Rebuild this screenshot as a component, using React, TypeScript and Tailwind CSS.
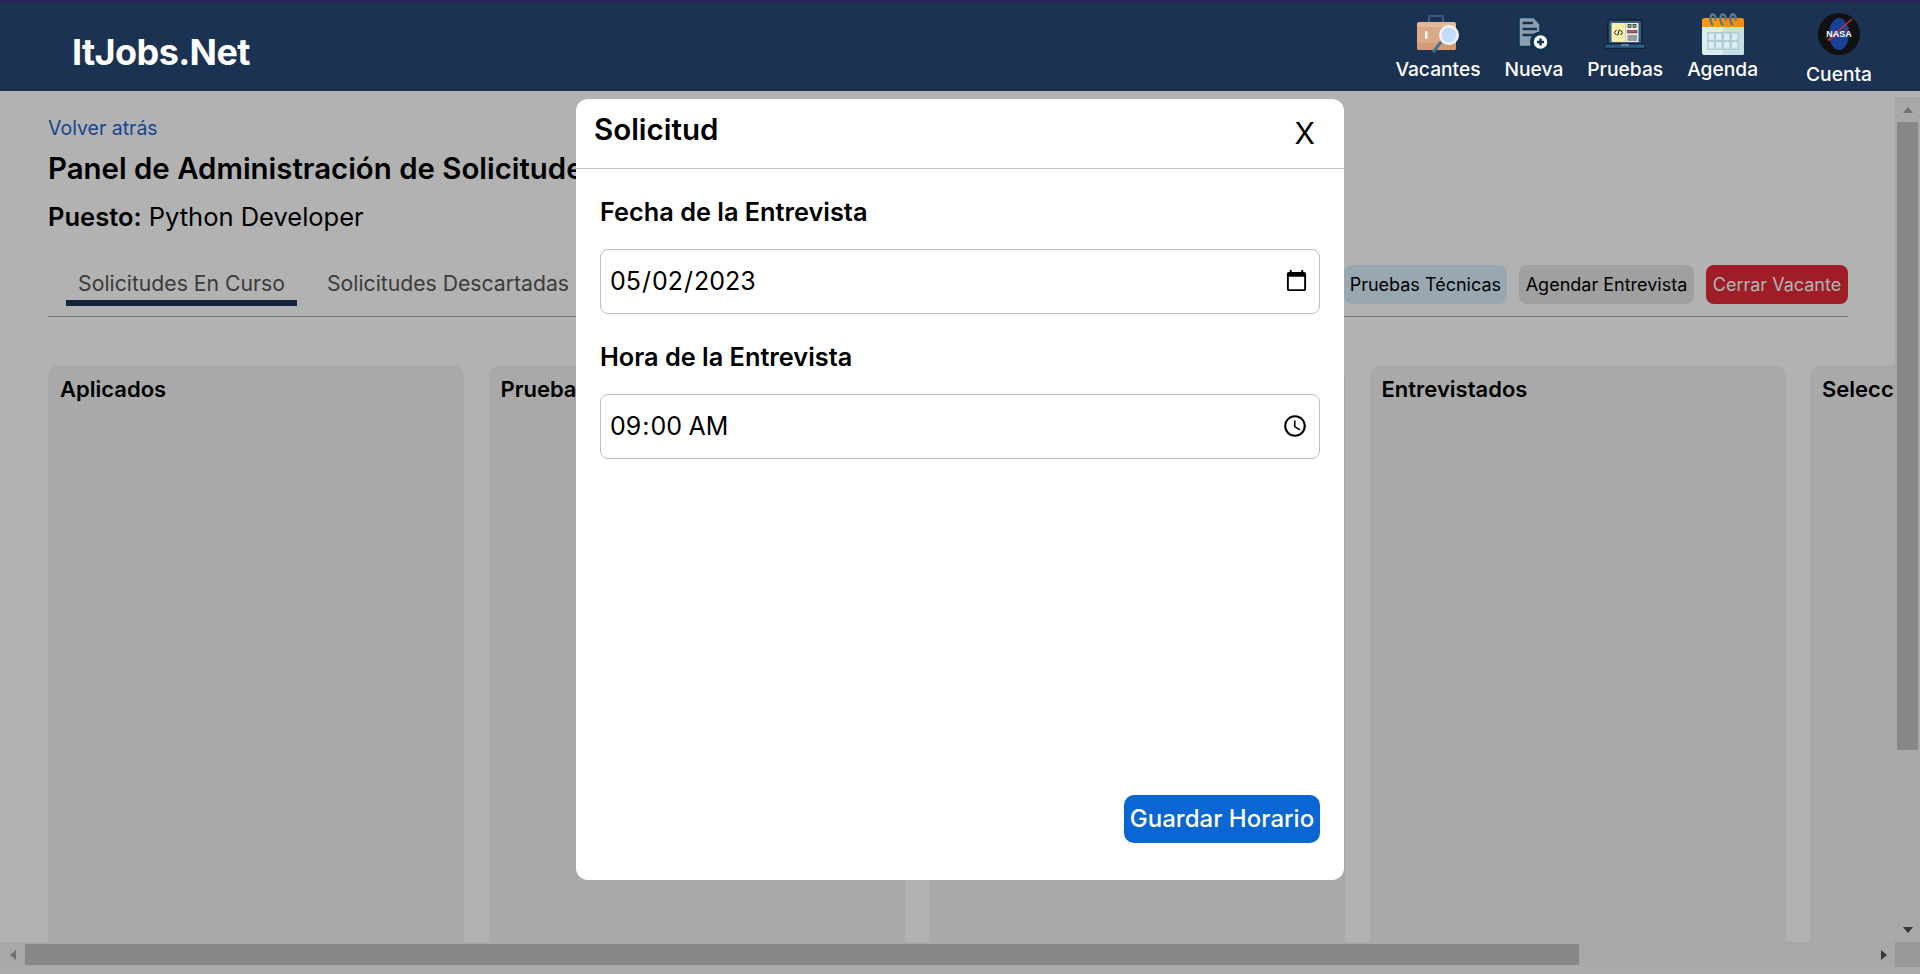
import React from "react";

const NavItem = ({ label, children, low }: { label: string; children: React.ReactNode; low?: boolean }) => (
  <a className={`flex flex-col items-center text-white text-[19.2px] font-medium leading-[22px] ${low ? "gap-[8px]" : "gap-[3px]"}`}>
    <span className="flex h-[42px] items-center justify-center">{children}</span>
    <span>{label}</span>
  </a>
);

const BriefcaseIcon = () => (
  <svg width="42" height="38" viewBox="0 0 42 38">
    <path d="M12 7V2.500A1.500 1.500 0 0 1 13.500 1h11A1.500 1.500 0 0 1 26 2.500V7" fill="none" stroke="#3a5d7e" strokeWidth="2.200" />
    <rect x="0" y="7" width="39" height="28" rx="2.500" fill="#dba985" />
    <path d="M0 9.500A2.500 2.500 0 0 1 2.500 7h34A2.500 2.500 0 0 1 39 9.500V12H0z" fill="#e6b898" />
    <rect x="0" y="28" width="39" height="7" rx="2.500" fill="#d39a74" />
    <rect x="8" y="16" width="2.500" height="8" rx="1.200" fill="#fff" />
    <path d="M24 27 16 37" stroke="#3f7398" strokeWidth="3" />
    <circle cx="32" cy="20" r="10" fill="#eef4fc" />
    <circle cx="32" cy="20" r="7.500" fill="#c6dafb" />
  </svg>
);

const NewDocIcon = () => (
  <svg width="34" height="37" viewBox="0 0 34 37">
    <path d="M1.500 3A2 2 0 0 1 3.500 1H17l6.500 7v23H3.500a2 2 0 0 1-2-2z" fill="#8e9db0" stroke="#0f3550" strokeWidth="2.500" />
    <path d="M5.500 7H16M5.500 13H20M5.500 19H20" stroke="#17324b" strokeWidth="2.500" />
    <circle cx="23.500" cy="26" r="10.500" fill="#10344f" />
    <circle cx="23.500" cy="26" r="6.800" fill="#ffffff" />
    <path d="M23.500 22.500v7M20 26h7" stroke="#10344f" strokeWidth="2.500" />
  </svg>
);

const LaptopIcon = () => (
  <svg width="42" height="30" viewBox="0 0 42 30">
    <rect x="4" y="1" width="34" height="24" rx="2" fill="#2f5d85" stroke="#10202f" strokeWidth="1.500" />
    <rect x="7.500" y="4" width="14" height="19" fill="#fdeeaa" />
    <rect x="21.500" y="4" width="13" height="19" fill="#eee" />
    <path d="M12.500 11l-2 2.500 2 2.500M16.500 11l2 2.500-2 2.500M15.300 10.500l-1.600 6" fill="none" stroke="#111" strokeWidth="1" />
    <rect x="24" y="5.500" width="3" height="3" fill="#8fb37a" stroke="#222" strokeWidth=".7" />
    <rect x="29" y="5.500" width="3" height="3" fill="#8fb37a" stroke="#222" strokeWidth=".7" />
    <rect x="23.500" y="11.500" width="9.500" height="2.500" fill="#c05a5a" stroke="#222" strokeWidth=".5" />
    <path d="M23.500 17h9.500M23.500 19h9.500M23.500 21h9.500" stroke="#333" strokeWidth=".9" />
    <rect x="0.700" y="25" width="40.600" height="4.300" rx="1.500" fill="#2f5d85" stroke="#10202f" strokeWidth="1.200" />
    <rect x="17" y="25" width="8" height="2" fill="#5b86a8" />
  </svg>
);

const CalendarIcon = () => (
  <svg width="42" height="42" viewBox="0 0 42 42">
    <path d="M0 8a3 3 0 0 1 3-3h36a3 3 0 0 1 3 3v8H0z" fill="#fe9a0c" />
    <path d="M21 5h18a3 3 0 0 1 3 3v8H21z" fill="#f98b0e" />
    <path d="M0 14h42v26a2 2 0 0 1-2 2H2a2 2 0 0 1-2-2z" fill="#dcecf0" />
    <path d="M21 14h21v26a2 2 0 0 1-2 2H21z" fill="#c6dfe5" />
    <rect x="5" y="19" width="32" height="18" fill="#afcdd4" />
    <g fill="#dcecf0">
      <rect x="6.500" y="20.500" width="5.500" height="6.500" />
      <rect x="14" y="20.500" width="5.500" height="6.500" />
      <rect x="22" y="20.500" width="5.500" height="6.500" />
      <rect x="30" y="20.500" width="5.500" height="6.500" />
      <rect x="6.500" y="29" width="5.500" height="6.500" />
      <rect x="14" y="29" width="5.500" height="6.500" />
      <rect x="22" y="29" width="5.500" height="6.500" />
      <rect x="30" y="29" width="5.500" height="6.500" />
    </g>
    <g fill="none" stroke="#5f7883" strokeWidth="2.500" strokeLinecap="round">
      <path d="M11 1.500c-2 0-2.500 2-2.500 4s.5 5 2 6" />
      <path d="M11 1.500c2 0 2.500 2 2.500 5" />
      <path d="M21 1.500c-2 0-2.500 2-2.500 4s.5 5 2 6" />
      <path d="M21 1.500c2 0 2.500 2 2.500 5" />
      <path d="M31 1.500c-2 0-2.500 2-2.500 4s.5 5 2 6" />
      <path d="M31 1.500c2 0 2.500 2 2.500 5" />
    </g>
  </svg>
);

const NasaIcon = () => (
  <svg width="42" height="42" viewBox="0 0 42 42">
    <circle cx="21" cy="21" r="21" fill="#111" />
    <ellipse cx="21" cy="21" rx="10" ry="16" fill="#1a3f96" />
    <path d="M10 27 34 6" stroke="#d8342c" strokeWidth="1.300" />
    <path d="M10 28 31 15" stroke="#d8342c" strokeWidth=".8" />
    <text x="21" y="24" textAnchor="middle" fontSize="9" fontWeight="700" fill="#fff" fontFamily="Liberation Sans, sans-serif">NASA</text>
  </svg>
);

const Column = ({ title }: { title: string }) => (
  <div className="w-[416px] shrink-0 rounded-t-xl bg-[#f2f2f2] px-3 pt-[10px]">
    <h3 className="text-[22px] leading-[28px] font-semibold text-black">{title}</h3>
  </div>
);

const Arrow = ({ points, cls }: { points: string; cls: string }) => (
  <svg width="12" height="12" viewBox="0 0 12 12" className={cls}>
    <polygon points={points} />
  </svg>
);

const App = () => {
  return (
    <div className="relative flex h-[974px] w-full flex-col overflow-hidden bg-white font-['Inter',sans-serif]">
      {/* Nav */}
      <header className="relative z-20 flex h-[91px] shrink-0 items-center justify-between border-t-2 border-[#2e2160] bg-[#1c3252] pl-[72px]">
        <a className="mt-[10px] text-[36px] font-bold leading-[44px] tracking-[-0.6px] text-white">ItJobs.Net</a>
        <nav className="mb-[6px] flex items-start">
          <div className="mt-[11px] flex gap-[24px]">
            <NavItem label="Vacantes"><BriefcaseIcon /></NavItem>
            <NavItem label="Nueva"><NewDocIcon /></NavItem>
            <NavItem label="Pruebas"><LaptopIcon /></NavItem>
            <NavItem label="Agenda"><CalendarIcon /></NavItem>
          </div>
          <div className="mt-[11px] ml-[48px] mr-[48px]">
            <NavItem label="Cuenta" low><NasaIcon /></NavItem>
          </div>
        </nav>
      </header>

      <div className="flex min-h-0 flex-1 flex-col pt-[6px]">
        <div className="flex min-h-0 flex-1">
          <main className="min-w-0 flex-1 overflow-hidden pl-[48px] pt-[19px]">
            <a className="block text-[19.5px] leading-[24px] text-[#2563c9]">Volver atrás</a>
            <h1 className="mt-[9px] text-[29.400px] font-semibold leading-[40px] text-black whitespace-nowrap">
              Panel de Administración de Solicitudes
            </h1>
            <p className="mt-[11px] text-[25.500px] leading-[34px] text-black">
              <span className="font-semibold">Puesto:</span> Python Developer
            </p>

            <div className="mt-[31px] flex h-[52px] w-[1800px] items-start justify-between border-b border-[#a3a3a3]">
              <div className="flex gap-[18px] pl-[18px] text-[21.200px] leading-[28px] text-[#555]">
                <button className="h-[41px] w-[231px] whitespace-nowrap border-b-[6px] border-[#1f3659] pt-[1px] text-center">Solicitudes En Curso</button>
                <button className="h-[41px] whitespace-nowrap border-b-[6px] border-transparent px-3 pt-[1px]">Solicitudes Descartadas</button>
              </div>
              <div className="flex gap-[12px] text-[18px]">
                <button className="h-[39px] rounded-lg bg-[#dcf0fe] px-[6px] text-black">Pruebas Técnicas</button>
                <button className="h-[39px] w-[175px] rounded-lg bg-[#e5e5e5] text-black">Agendar Entrevista</button>
                <button className="h-[39px] w-[142px] rounded-lg bg-[#e32a39] text-white">Cerrar Vacante</button>
              </div>
            </div>

            <div className="mt-[48px] flex h-[600px] w-max gap-[24.5px]">
              <Column title="Aplicados" />
              <Column title="Pruebas Técnicas" />
              <Column title="Agendados" />
              <Column title="Entrevistados" />
              <Column title="Seleccionados" />
            </div>
          </main>

          {/* vertical scrollbar */}
          <div className="flex w-[25px] shrink-0 flex-col bg-[#f1f1f1] pl-[2px] pr-[2px]">
            <div className="flex h-[25px] items-center justify-center">
              <Arrow points="1,9 6,3 11,9" cls="fill-[#a3a3a3]" />
            </div>
            <div className="h-[628px] bg-[#c2c2c2]" />
            <div className="flex flex-1 items-end justify-center pb-[6px]">
              <Arrow points="1,3 11,3 6,9" cls="fill-[#505050]" />
            </div>
          </div>
        </div>

        {/* horizontal scrollbar */}
        <div className="flex h-[25px] shrink-0 items-center bg-[#f1f1f1]">
          <div className="flex w-[25px] justify-center">
            <Arrow points="9,1 3,6 9,11" cls="fill-[#a3a3a3]" />
          </div>
          <div className="h-[21px] w-[1554px] bg-[#c2c2c2]" />
          <div className="flex flex-1 justify-end pr-[5px]">
            <Arrow points="3,1 9,6 3,11" cls="fill-[#505050]" />
          </div>
          <div className="h-full w-[25px] bg-[#dcdcdc]" />
        </div>
        <div className="h-[7px] shrink-0 bg-[#f5f5f5]" />
      </div>

      {/* Overlay + modal */}
      <div className="absolute inset-x-0 bottom-0 top-[91px] z-10 bg-black/30 pt-[8px]">
        <div className="mx-auto flex h-[781px] w-[768px] flex-col rounded-xl bg-white">
          <div className="flex h-[70px] shrink-0 items-start justify-between border-b border-[#c4c4c4] pl-[18px] pr-[29px]">
            <h2 className="pt-[12px] text-[29.500px] font-semibold leading-[36px] text-black">Solicitud</h2>
            <button className="pt-[16px] text-[30px] leading-[36px] text-black">X</button>
          </div>
          <div className="flex flex-1 flex-col px-6 pt-[27px]">
            <label className="text-[25.300px] font-semibold leading-[32px] text-black">Fecha de la Entrevista</label>
            <input
              type="date"
              defaultValue="2023-05-02"
              className="mt-[21px] h-[65px] w-full rounded-lg border border-[#c0c0c0] pl-[8px] pr-[8px] text-[25px] text-black"
            />
            <label className="mt-[27px] text-[25.300px] font-semibold leading-[32px] text-black">Hora de la Entrevista</label>
            <input
              type="time"
              defaultValue="09:00"
              className="mt-[21px] h-[65px] w-full rounded-lg border border-[#c0c0c0] pl-[8px] pr-[8px] text-[25px] text-black"
            />
            <div className="mt-auto mb-[37px] flex justify-end">
              <button className="h-[48px] w-[196px] rounded-[10px] bg-[#0a66d2] text-[24px] font-medium text-white">
                Guardar Horario
              </button>
            </div>
          </div>
        </div>
      </div>
    </div>
  );
};

export default App;
